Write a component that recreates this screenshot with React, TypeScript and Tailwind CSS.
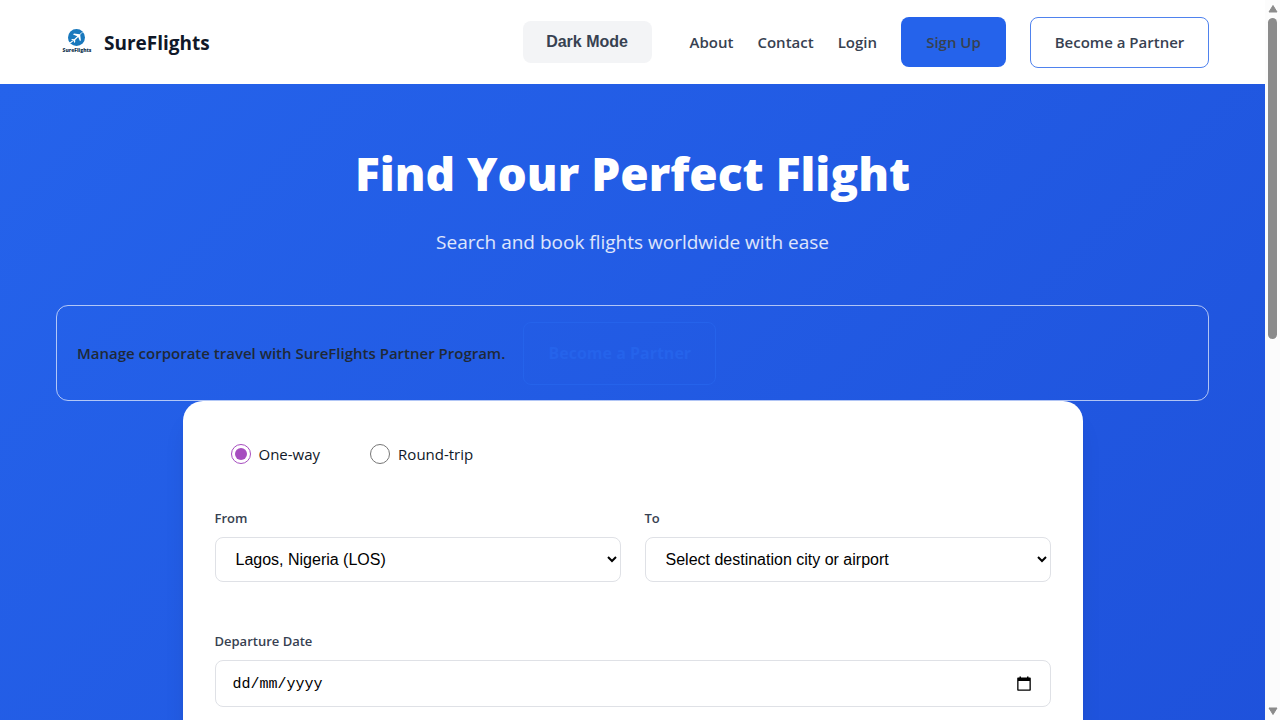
import type { ReactNode } from "react";

const fieldClass =
  "w-full rounded-lg border border-[#dfe1e6] bg-white px-4 text-base text-black font-['Liberation_Sans',sans-serif]";

function Logo() {
  return (
    <svg viewBox="0 0 40 40" className="size-10" aria-hidden="true">
      <circle cx="20.500" cy="15.500" r="8.500" fill="#1878bd" />
      <path
        d="M29.500 9.300c-1.700-.1-3 .5-4.200 1.500l-1.700 1.400-5.600-.6-1 .9 4.300 1.700-3.200 3-2.100-.1-.8.700 2.300.9.900 2.200.8-.8v-2l3-3.100 1.800 4.200.9-1-.7-5.400 1.600-1.700c1-1 1.900-1.100 3.700-1.800z"
        fill="#fff"
      />
      <path d="M11.500 21.700c2.300-.3 3.800-1.200 5.200-2.900" stroke="#fff" strokeWidth="1.100" fill="none" />
      <text
        x="21"
        y="30"
        textAnchor="middle"
        fontSize="5"
        fontWeight="800"
        fontFamily="Open Sans, sans-serif"
        fill="#12344f"
      >
        SureFlights
      </text>
    </svg>
  );
}

function NavLink({ children }: { children: ReactNode }) {
  return (
    <a href="#" className="whitespace-nowrap">
      {children}
    </a>
  );
}

function Header() {
  return (
    <header className="flex h-[84px] items-center justify-between bg-white px-14">
      <a href="#" className="flex items-center gap-2 text-[19px] font-bold text-gray-900">
        <Logo />
        <span className="pt-0.5">SureFlights</span>
      </a>
      <nav className="flex items-center gap-6 text-[15px] font-semibold text-[#374151]">
        <button
          type="button"
          className="mr-3.5 h-[42px] w-[129px] rounded-lg bg-gray-100 font-['Liberation_Sans',sans-serif] text-base font-bold"
        >
          Dark Mode
        </button>
        <NavLink>About</NavLink>
        <NavLink>Contact</NavLink>
        <NavLink>Login</NavLink>
        <a
          href="#"
          className="flex h-[50px] w-[105px] items-center justify-center whitespace-nowrap rounded-lg bg-[#2563eb]"
        >
          Sign Up
        </a>
        <a
          href="#"
          className="flex h-[51px] w-[179px] items-center justify-center whitespace-nowrap rounded-lg border border-[#4f82ee]"
        >
          Become a Partner
        </a>
      </nav>
    </header>
  );
}

function PartnerBanner() {
  return (
    <div className="flex h-24 items-center gap-[18px] rounded-xl border border-white/65 px-5 text-[15px]">
      <p className="font-semibold text-[#1f2937]">
        Manage corporate travel with SureFlights Partner Program.
      </p>
      <a
        href="#"
        className="flex h-[63px] w-[193px] items-center justify-center rounded-lg border border-[#2563eb] text-base font-bold text-[#2563eb]"
      >
        Become a Partner
      </a>
    </div>
  );
}

function TripOption({ label, checked }: { label: string; checked?: boolean }) {
  return (
    <label className="flex items-center gap-2 text-[15px] text-gray-900">
      <input type="radio" name="trip" defaultChecked={checked} className="size-5 accent-[#a64dbf]" />
      {label}
    </label>
  );
}

function Field({ id, label, children }: { id: string; label: string; children: ReactNode }) {
  return (
    <div>
      <label htmlFor={id} className="mb-2 block text-[13px] leading-[22px] font-semibold text-[#374151]">
        {label}
      </label>
      {children}
    </div>
  );
}

function SearchCard() {
  return (
    <form className="mx-auto max-w-[900px] rounded-[20px] bg-white px-8 pt-10 pb-96 shadow-xl">
      <div className="flex h-[26px] items-center gap-[50px] px-4">
        <TripOption label="One-way" checked />
        <TripOption label="Round-trip" />
      </div>
      <div className="mt-10 grid grid-cols-2 gap-6">
        <Field id="from" label="From">
          <select id="from" className={`${fieldClass} h-[45px]`}>
            <option>Lagos, Nigeria (LOS)</option>
          </select>
        </Field>
        <Field id="to" label="To">
          <select id="to" className={`${fieldClass} h-[45px]`}>
            <option>Select destination city or airport</option>
          </select>
        </Field>
      </div>
      <div className="mt-12">
        <Field id="departure" label="Departure Date">
          <div className="flex h-[47px] items-center rounded-lg border border-[#dfe1e6] pr-[18px] pl-[17px]">
            <input
              id="departure"
              type="text"
              placeholder="dd/mm/yyyy"
              className="h-full min-w-0 flex-1 bg-transparent pt-0.5 font-['Liberation_Mono',monospace] text-[15px] text-black outline-none placeholder:text-black"
            />
            <button type="button" aria-label="Open calendar">
              <svg viewBox="0 0 16 16" className="size-4" aria-hidden="true">
                <path
                  d="M3.500.5H5v1h6v-1h1.500v1H14a.8.8 0 0 1 .8.8v11.700a.8.8 0 0 1-.8.8H2a.8.8 0 0 1-.8-.8V2.300a.8.8 0 0 1 .8-.8h1.500zM2.500 5v8.500h11V5z"
                  fill="#000"
                />
              </svg>
            </button>
          </div>
        </Field>
      </div>
    </form>
  );
}

function ScrollTrack() {
  return (
    <div className="flex w-[15px] shrink-0 flex-col items-center justify-between bg-[#fcfcfc] py-1" aria-hidden="true">
      <div className="flex min-h-0 flex-1 flex-col items-center gap-[5px]">
        <svg viewBox="0 0 10 9" className="h-[9px] w-2.5">
          <path d="M5 1.500 9 8H1z" fill="#8b8b8b" stroke="#8b8b8b" strokeLinejoin="round" />
        </svg>
        <div className="h-[45.7%] w-[9px] rounded-full bg-[#8b8b8b]" />
      </div>
      <svg viewBox="0 0 10 9" className="h-[9px] w-2.5">
        <path d="M5 7.500 9 1H1z" fill="#8b8b8b" stroke="#8b8b8b" strokeLinejoin="round" />
      </svg>
    </div>
  );
}

export default function App() {
  return (
    <div className="flex h-screen overflow-hidden bg-white font-['Open_Sans',sans-serif]">
      <div className="min-w-0 flex-1 overflow-hidden">
        <Header />
        <main className="bg-linear-[135deg] from-[#2563eb] to-[#1d4ed8] px-14 pt-[59px] pb-16">
          <h1 className="text-center text-[46px] leading-[60px] font-extrabold text-white">
            Find Your Perfect Flight
          </h1>
          <p className="mt-6 mb-12 text-center text-[19px] leading-[30px] text-white/85">
            Search and book flights worldwide with ease
          </p>
          <PartnerBanner />
          <SearchCard />
        </main>
      </div>
      <ScrollTrack />
    </div>
  );
}
